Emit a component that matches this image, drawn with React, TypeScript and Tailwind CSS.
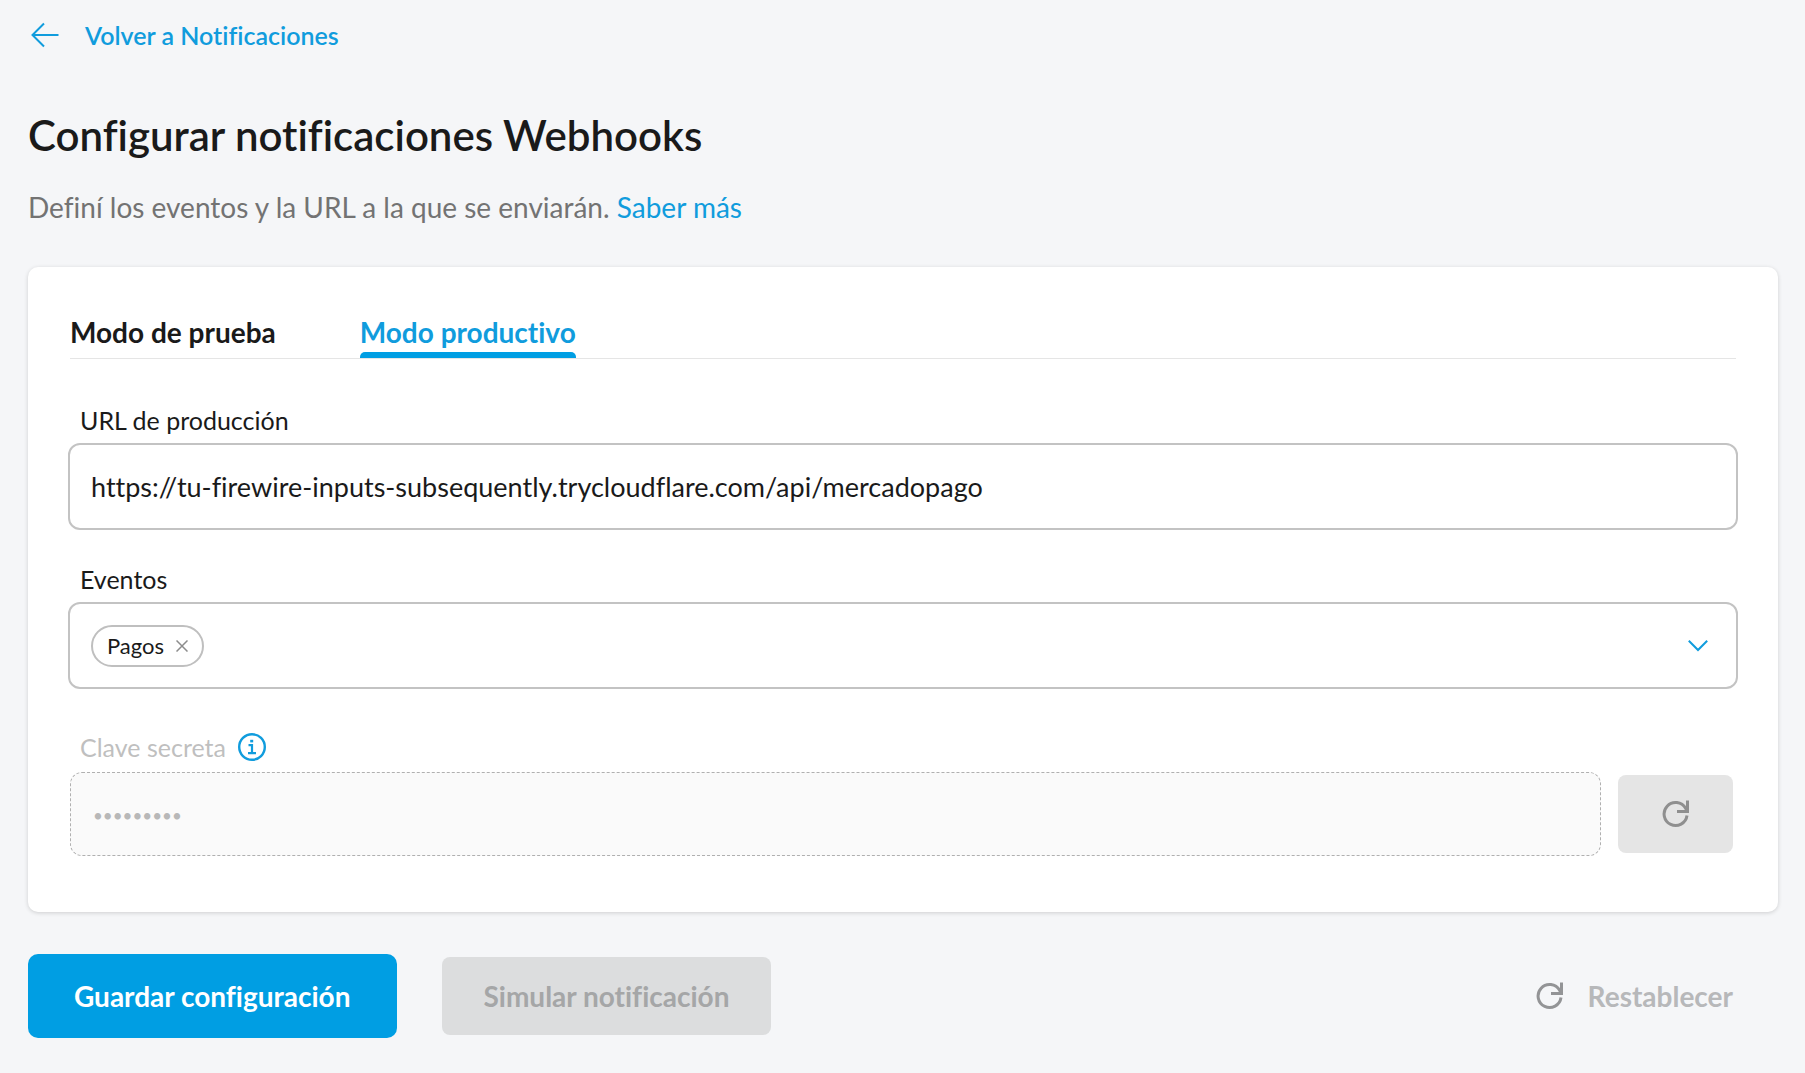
import React, { useState } from 'react'

function ArrowLeftIcon() {
  return (
    <svg width="28" height="26" viewBox="0 0 28 26" fill="none" stroke="currentColor" strokeWidth="2" aria-hidden="true">
      <path d="M13 1.5 1.5 13 13 24.5M1.5 13H27.5" />
    </svg>
  )
}

function RefreshIcon() {
  return (
    <svg width="28" height="28" viewBox="0 0 28 28" fill="none" stroke="currentColor" strokeWidth="3" aria-hidden="true">
      <path d="M25 15.5A11.5 11.5 0 1 1 23.6 8.3L25 10.8" />
      <path d="M25.5 0.5V11.5H15" />
    </svg>
  )
}

function InfoIcon() {
  return (
    <svg width="28" height="28" viewBox="0 0 28 28" fill="none" stroke="currentColor" strokeWidth="2.4" aria-hidden="true">
      <circle cx="14" cy="14" r="12.8" />
      <path d="M10.5 12.2H14V20.2M10 20.2H18" strokeWidth="2.2" />
      <rect x="12.2" y="6.8" width="3" height="2.6" fill="currentColor" stroke="none" />
    </svg>
  )
}

function ChevronDownIcon() {
  return (
    <svg width="20" height="12" viewBox="0 0 20 12" fill="none" stroke="currentColor" strokeWidth="2" aria-hidden="true">
      <path d="m0.8 0.8 9.2 9.2 9.2-9.2" />
    </svg>
  )
}

function CloseIcon() {
  return (
    <svg width="12" height="12" viewBox="0 0 12 12" fill="none" stroke="currentColor" strokeWidth="1.5" aria-hidden="true">
      <path d="m0.5 0.5 11 11M11.5 0.5l-11 11" />
    </svg>
  )
}

const tabs = [
  { id: 'prueba', label: 'Modo de prueba' },
  { id: 'productivo', label: 'Modo productivo' },
]

export default function App() {
  const [tab, setTab] = useState('productivo')
  const [url, setUrl] = useState('https://tu-firewire-inputs-subsequently.trycloudflare.com/api/mercadopago')
  const [events, setEvents] = useState(['Pagos'])

  return (
    <div className="min-h-screen bg-[#f5f6f8] pt-[19px] pr-[27px] pb-8 pl-7 font-['Lato','Open_Sans',sans-serif] text-[#1a1a1a] [font-variant-ligatures:none]">
      <a href="#notificaciones" className="flex w-fit items-center gap-[26px] pl-[3px] text-[25px] leading-8 font-semibold text-[#109cdd]">
        <ArrowLeftIcon />
        Volver a Notificaciones
      </a>

      <h1 className="mt-[60px] text-[42px] leading-12 font-semibold">Configurar notificaciones Webhooks</h1>
      <p className="mt-8 text-[28px] leading-8 text-[#737373]">
        Definí los eventos y la URL a la que se enviarán.{' '}
        <a href="#saber-mas" className="text-[#109cdd]">Saber más</a>
      </p>

      <main className="mt-11 rounded-[10px] bg-white px-10 pt-[49px] pb-14 shadow-[0_1px_4px_rgba(0,0,0,0.16)]">
        <div role="tablist" className="mx-0.5 flex gap-[84px] border-b border-[#e5e5e5]">
          {tabs.map((t) => (
            <button
              key={t.id}
              type="button"
              role="tab"
              aria-selected={tab === t.id}
              onClick={() => setTab(t.id)}
              className={
                tab === t.id
                  ? 'text-[28px] leading-8 font-bold text-[#109cdd]'
                  : 'text-[28px] leading-8 font-bold'
              }
            >
              {t.label}
              <span className={tab === t.id ? 'mt-1 block h-1.5 rounded-t-[5px] bg-[#009ee3]' : 'mt-1 block h-1.5'} />
            </button>
          ))}
        </div>

        <label htmlFor="url" className="mt-[45px] block pl-3 text-[25px] leading-8">URL de producción</label>
        <input
          id="url"
          type="text"
          value={url}
          onChange={(e) => setUrl(e.target.value)}
          className="mt-[7px] block h-[87px] w-full rounded-xl border-2 border-[#c3c3c3] bg-white px-[21px] text-[27px] outline-none"
        />

        <label htmlFor="eventos" className="mt-[33px] block pl-3 text-[25px] leading-8">Eventos</label>
        <div className="mt-[7px] flex h-[87px] items-center rounded-xl border-2 border-[#c3c3c3] pr-7 pl-[21px]">
          {events.map((ev) => (
            <span key={ev} className="flex h-[42px] items-center gap-3 rounded-full border-2 border-[#bfbfbf] px-3.5 text-[22px] leading-6">
              {ev}
              <button
                type="button"
                aria-label={`Quitar ${ev}`}
                onClick={() => setEvents(events.filter((x) => x !== ev))}
                className="text-[#8c8c8c]"
              >
                <CloseIcon />
              </button>
            </span>
          ))}
          <select
            id="eventos"
            value=""
            onChange={(e) => setEvents([...events, e.target.value])}
            className="h-full min-w-0 flex-1 appearance-none bg-transparent outline-none"
          >
            <option value="" />
            {!events.includes('Pagos') && <option value="Pagos">Pagos</option>}
          </select>
          <span className="text-[#109cdd]">
            <ChevronDownIcon />
          </span>
        </div>

        <div className="mt-[42px] flex items-center gap-3 pl-3 text-[25px] leading-8 text-[#bfbfbf]">
          <label htmlFor="clave">Clave secreta</label>
          <button type="button" aria-label="Información sobre la clave secreta" className="text-[#109cdd]">
            <InfoIcon />
          </button>
        </div>
        <div className="mt-[9px] mr-[5px] ml-0.5 flex items-center gap-[17px]">
          <input
            id="clave"
            type="password"
            defaultValue="secreto12"
            disabled
            className="h-[84px] min-w-0 flex-1 rounded-xl border border-dashed border-[#b0b0b0] bg-[#fafafa] px-[22px] pt-[3px] text-[17px] text-[#b8b8b8]"
          />
          <button type="button" disabled aria-label="Renovar clave" className="flex h-[78px] w-[115px] items-center justify-center rounded-lg bg-[#e5e5e5] text-[#8f8f8f]">
            <RefreshIcon />
          </button>
        </div>
      </main>

      <footer className="mt-[42px] flex items-center text-[28px] leading-8 font-bold">
        <button type="button" className="h-[84px] rounded-[10px] bg-[#009ee3] px-[46px] text-white">Guardar configuración</button>
        <button type="button" disabled className="ml-[45px] h-[78px] rounded-lg bg-[#dcddde] px-[42px] text-[#a5a6a7]">Simular notificación</button>
        <button type="button" disabled className="mr-[45px] ml-auto flex items-center gap-6 text-[#b7b8ba]">
          <span className="text-[#939496]">
            <RefreshIcon />
          </span>
          Restablecer
        </button>
      </footer>
    </div>
  )
}
